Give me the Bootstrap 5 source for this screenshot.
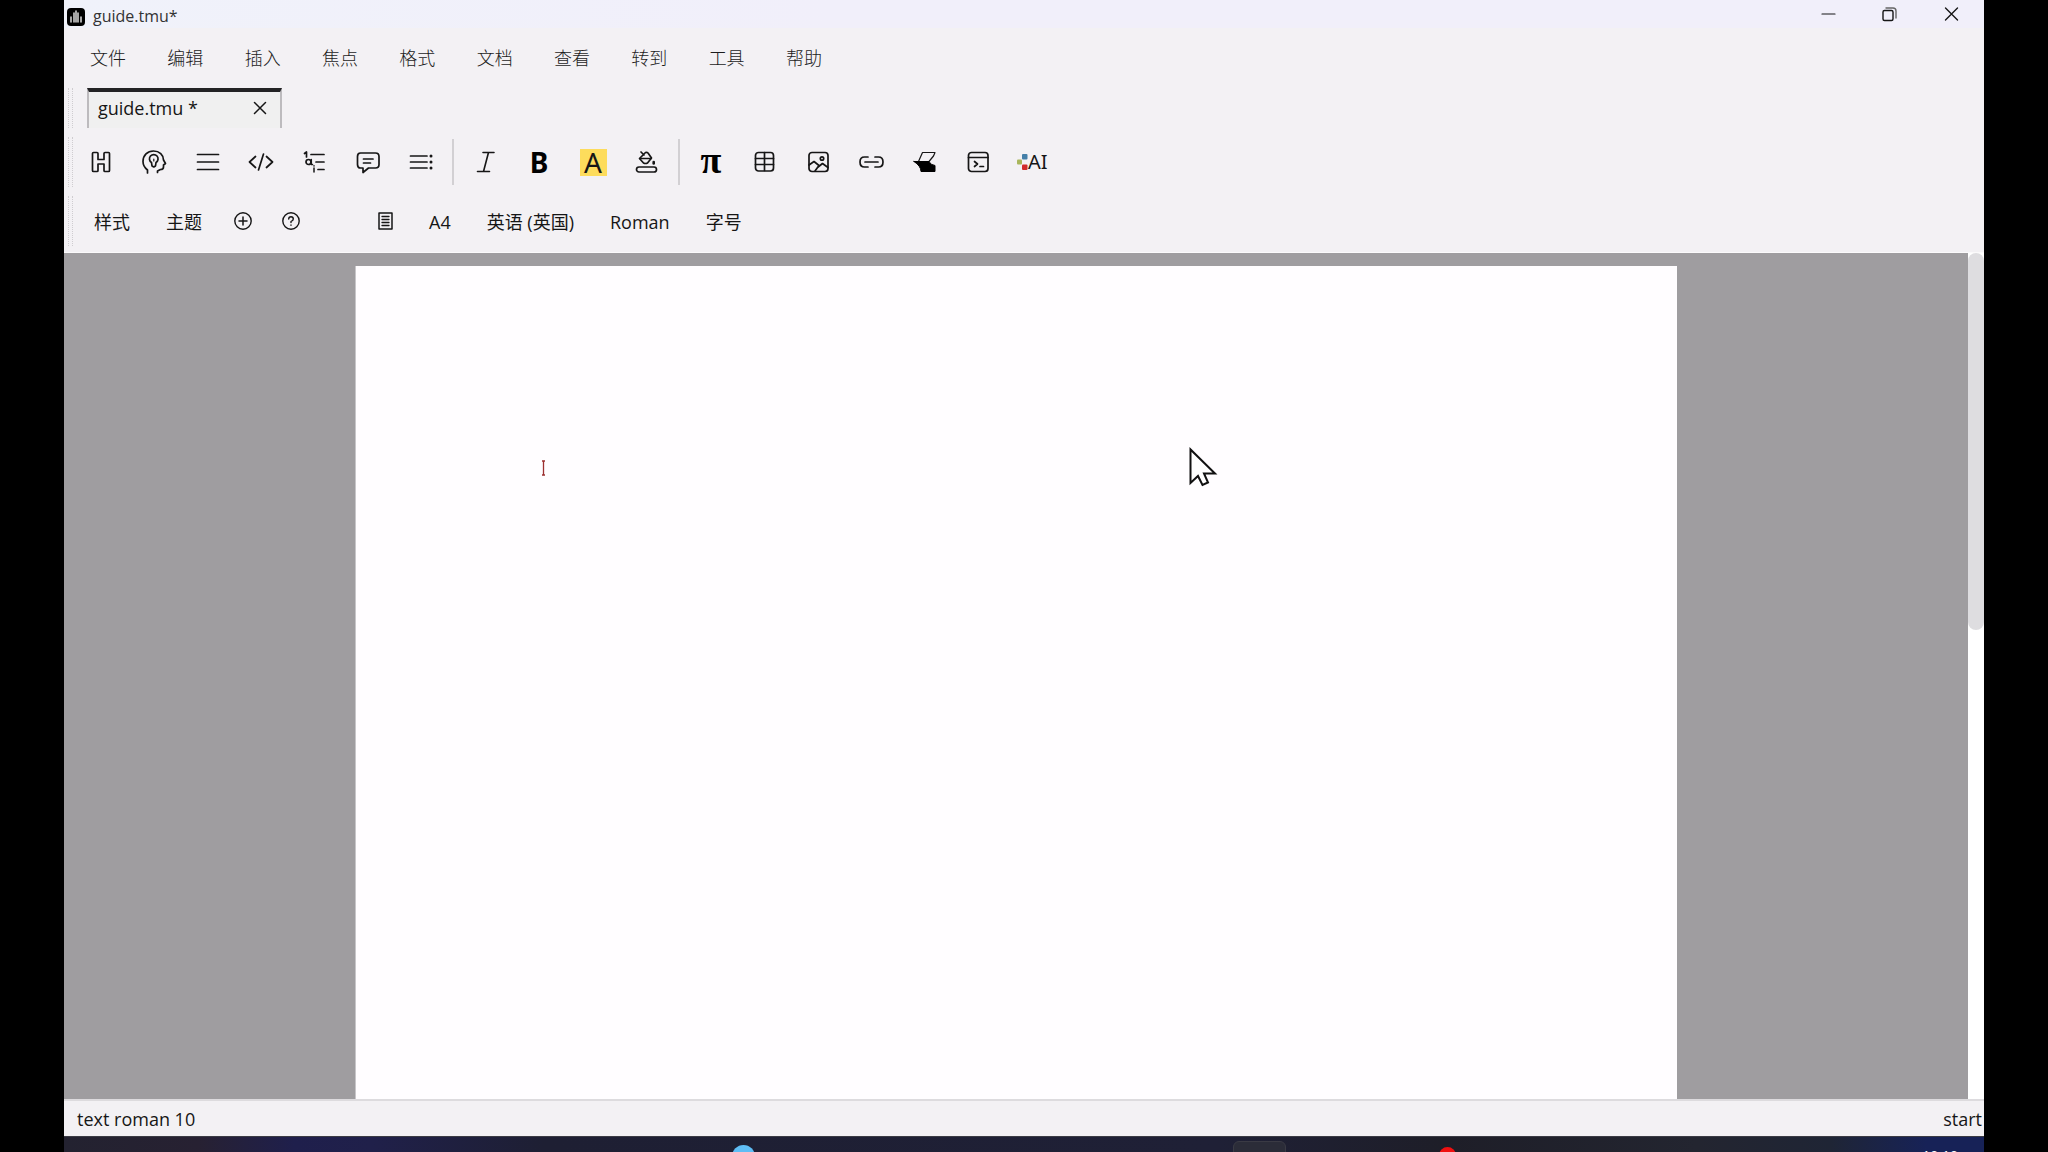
<!DOCTYPE html>
<html lang="zh-CN">
<head>
<meta charset="utf-8">
<meta name="viewport" content="width=device-width, initial-scale=1">
<title>guide.tmu*</title>
<link href="https://cdn.jsdelivr.net/npm/bootstrap@5.3.0/dist/css/bootstrap.min.css" rel="stylesheet">
<script src="https://cdn.jsdelivr.net/npm/bootstrap@5.3.0/dist/js/bootstrap.bundle.min.js"></script>
<style>
  :root { --chrome: #f3f1f4; --desk: #9f9da0; --ink: #161616; }
  body { background: #000; color: var(--ink); font-family: "Open Sans", "Noto Sans CJK SC", sans-serif; font-size: 18px; line-height: 24px; }
  button { font: inherit; color: inherit; background: none; border: 0; padding: 0; }
  svg { display: block; fill: none; stroke: var(--ink); stroke-width: 1.7; stroke-linecap: round; stroke-linejoin: round; }
  .app-window { margin: 0 64px; background: var(--chrome); }
  .title-bar { height: 28px; background: linear-gradient(90deg, #f0f2fa, #f1effa 40%, #f1effa); font-size: 16px; padding-left: 3px; color: #333; }
  .title-name { padding-top: 4px; }
  .win-buttons { gap: 30px; padding-right: 16px; }
  .menu-strip { height: 60px; padding-left: 26px; }
  .menu-list { width: 732px; }
  .menu-list a { color: #1c1c1c; text-decoration: none; font-weight: 300; }
  .grip { width: 5px; margin-left: 4px; border: dotted #cfcdd0; border-width: 0 1px; }
  .tab-strip { height: 40px; }
  .doc-tab { width: 195px; margin-left: 14px; padding: 0 13px 4px 9px; background: #f0f0f0; border: 2px solid #bdbbbe; border-top: 4px solid #232325; border-bottom: 0; }
  .icon-strip { height: 50px; margin-top: 9px; }
  .icon-strip button { width: 32px; height: 32px; }
  .tools-a { width: 352px; margin-left: 12px; }
  .tools-b { width: 194px; }
  .divider { width: 2px; height: 46px; margin: 0 15px; background: #d2d0d3; }
  .glyph-b { font: 700 28px/32px "Noto Sans", sans-serif; color: #000; }
  .glyph-a { font: 400 28px/27px "Noto Sans", sans-serif; background: #fddc5c; width: 27px; height: 27px; }
  .icon-strip .glyph-pi { font: 700 38px/28px "Liberation Serif", serif; color: #000; padding-bottom: 4px; }
  .icon-strip .glyph-ai { font: 400 20px/32px "Noto Sans", sans-serif; }
  .style-strip { height: 50px; margin-top: 9px; margin-bottom: 6px; }
  .style-tools { gap: 36px; margin-left: 21px; padding-top: 2px; }
  .style-tools svg { margin-bottom: 2px; }
  .round-tools { gap: 30px; margin: 0 42px 0 -4px; }
  .desk { background: var(--desk); border-top: 1px solid #fbfafb; min-height: 0; }
  .paper { width: 69.4%; margin-top: 13px; padding: 194px 185px; background: #fffdff; border-left: 1px solid #c8c6c9; }
  .scroll-track { width: 16px; background: #fff; }
  .scroll-thumb { height: 44.6%; background: #dedde0; border-radius: 8px; }
  .status-bar { height: 37px; padding: 0 2px 0 13px; border-top: 2px solid #dddbde; }
  .task-bar { height: 16px; border-top: 1px solid #3b3b44; background: linear-gradient(90deg, #232230, #272132 7%, #1f1f4c 12%, #20204a 16%, #1e1f33 25%, #1f2036 60%, #1e1e28 72%, #232530 85%, #1f2535 92%, #172257 97%); }
  .task-items > * { position: absolute; }
  .task-blue { left: 668px; top: 8px; width: 23px; height: 23px; border-radius: 50%; background: #5fbdf5; }
  .task-box { left: 1169px; top: 4px; width: 53px; height: 40px; border-radius: 6px; background: #2b2c38; border: 1px solid #3a3a44; }
  .task-red { left: 1375px; top: 10px; width: 17px; height: 17px; border-radius: 50%; background: #f01010; }
  .task-clock { right: 26px; top: 7px; font-size: 14px; color: #fff; }
  .pointer { position: absolute; left: 1187px; top: 445px; }
</style>
</head>
<body>
<div class="app-window d-flex flex-column vh-100 overflow-hidden">
  <header class="title-bar d-flex justify-content-between">
    <div class="d-flex gap-2 title-left">
      <svg class="mt-1 pt-1" width="18" height="22" viewBox="0 0 18 18"><rect x="0" y="0" width="18" height="18" rx="4" fill="#000" stroke="none"/><path d="M4 14V9M7 14V5M9 14V3M11 14V5M14 14V9" stroke="#ddd" stroke-width="1.5"/></svg>
      <span class="title-name">guide.tmu*</span>
    </div>
    <div class="win-buttons d-flex align-items-center">
      <button type="button" aria-label="最小化"><svg width="32" height="28" viewBox="0 0 32 28"><path d="M10 14h13" stroke-width="1.2"/></svg></button>
      <button type="button" aria-label="还原"><svg width="32" height="28" viewBox="0 0 32 28"><rect x="9" y="10.500" width="10" height="10" rx="1.500" stroke-width="1.400"/><path d="M12 8h7q3 0 3 3v7" stroke="#666" stroke-width="1.400"/></svg></button>
      <button type="button" aria-label="关闭"><svg width="32" height="28" viewBox="0 0 32 28"><path d="M9.500 8l12 12M21.500 8l-12 12" stroke-width="1.400"/></svg></button>
    </div>
  </header>

  <nav class="menu-strip d-flex align-items-center">
    <div class="menu-list d-flex justify-content-between">
      <a href="#">文件</a><a href="#">编辑</a><a href="#">插入</a><a href="#">焦点</a><a href="#">格式</a><a href="#">文档</a><a href="#">查看</a><a href="#">转到</a><a href="#">工具</a><a href="#">帮助</a>
    </div>
  </nav>

  <div class="tab-strip d-flex">
    <div class="grip"></div>
    <div class="doc-tab d-flex justify-content-between align-items-center">
      <span>guide.tmu *</span>
      <button type="button" aria-label="关闭标签"><svg width="14" height="14" viewBox="0 0 14 14"><path d="M1.500 1.500l11 11M12.500 1.500l-11 11" stroke-width="1.500"/></svg></button>
    </div>
  </div>

  <div class="icon-strip d-flex align-items-center">
    <div class="grip align-self-stretch"></div>
    <div class="tools-a d-flex justify-content-between">
      <button type="button" aria-label="标题"><svg width="32" height="32" viewBox="0 0 32 32"><path d="M8.500 6.500h3.500q1 0 1 1v6h6v-6q0-1 1-1h3.500q1 0 1 1v17q0 1-1 1h-3.500q-1 0-1-1v-6.500h-6v6.500q0 1-1 1h-3.500q-1 0-1-1v-17q0-1 1-1z"/></svg></button>
      <button type="button" aria-label="思路"><svg width="32" height="32" viewBox="0 0 32 32"><path d="M9.500 27V24Q5 20.500 5 15.500C5 9 9.500 5 15.500 5S25.500 9 25.500 14L27.500 17.500L25.500 19V21Q25.500 23.500 22.500 23.500L19.500 25V26.500"/><path d="M13.500 16.500A4.300 4.300 0 1 1 18 16.500L17.500 20L15.800 21L14 20z"/><path d="M15.800 13v2" stroke-width="1.200"/></svg></button>
      <button type="button" aria-label="段落"><svg width="32" height="32" viewBox="0 0 32 32"><path d="M5.500 8.500h21M5.500 16h21M5.500 23.500h21"/></svg></button>
      <button type="button" aria-label="代码"><svg width="32" height="32" viewBox="0 0 32 32"><path d="M10.500 10.500L4.500 16l6 5.500M21.500 10.500l6 5.500-6 5.500M18.500 8l-5 16"/></svg></button>
      <button type="button" aria-label="列表"><svg width="32" height="32" viewBox="0 0 32 32"><path d="M6.500 7.500L8.500 6v5M13 8.500h13M18 16h8M20 23.500h6"/><circle cx="10.500" cy="16" r="2.500"/><path d="M13.300 13.500v5h1.200M16 22v4M16 19.800v.2" stroke-width="1.500"/></svg></button>
      <button type="button" aria-label="注释"><svg width="32" height="32" viewBox="0 0 32 32"><path d="M8.500 7h15q3.500 0 3.500 3.500v8q0 3.500-3.500 3.500h-7L11 26.500V22H8.500Q5.500 22 5.500 18.500v-8Q5.500 7 8.500 7zM11.500 13h9.500M11.500 17h7"/></svg></button>
      <button type="button" aria-label="目录"><svg width="32" height="32" viewBox="0 0 32 32"><path d="M5.500 10h16.500M5.500 16h16.500M5.500 22h16.500"/><path d="M26 10v.1M26 16v.1M26 22v.1" stroke-width="3"/></svg></button>
    </div>
    <div class="divider"></div>
    <div class="tools-b d-flex justify-content-between align-items-center">
      <button type="button" aria-label="斜体"><svg width="32" height="32" viewBox="0 0 32 32"><path d="M14 6.500h11M8.500 25.500h12M19.500 6.500L14.500 25.500" stroke-width="1.600"/></svg></button>
      <button type="button" class="glyph-b">B</button>
      <button type="button" class="d-flex justify-content-center align-items-center"><span class="glyph-a">A</span></button>
      <button type="button" aria-label="填充颜色"><svg width="32" height="32" viewBox="0 0 32 32"><rect x="5.500" y="21" width="20" height="5" rx="2.500"/><path d="M10 6l3 3M14.500 6.500Q16 6 17 7L20.500 12L16.500 17q-2 1-4 0L8.500 12.500z"/><path d="M9 12.500h11"/><path d="M22.700 16v1.400" stroke-width="2.600"/></svg></button>
    </div>
    <div class="divider"></div>
    <div class="tools-c d-flex justify-content-between tools-a ms-0">
      <button type="button" class="glyph-pi">π</button>
      <button type="button" aria-label="表格"><svg width="32" height="32" viewBox="0 0 32 32"><rect x="7.500" y="6.500" width="18" height="18.500" rx="3"/><path d="M7.500 12.500h18M7.500 18.500h18M16.500 6.500v18"/></svg></button>
      <button type="button" aria-label="图片"><svg width="32" height="32" viewBox="0 0 32 32"><rect x="7" y="6.500" width="19" height="19" rx="3"/><circle cx="20" cy="12.500" r="1.700"/><path d="M7 19l5-3.500 5 4-4 5.500M15.500 21.500l5-4 5.500 4"/></svg></button>
      <button type="button" aria-label="链接"><svg width="32" height="32" viewBox="0 0 32 32"><path d="M13 11H9.500Q5 11 5 16T9.500 21H13M20 11h3.500Q28 11 28 16T23.500 21H20M10 16h13"/></svg></button>
      <button type="button" aria-label="橡皮擦"><svg width="32" height="32" viewBox="0 0 32 32"><path d="M10.500 15.500L14.500 6.500H27L25.500 10L21 15.500" fill="#f3f1f4" stroke-width="1.200"/><path d="M6 15.500H21Q22.500 19 27 19.500V25.500H13Q13 20 6 15.500z" fill="#000" stroke="#000" stroke-width="1"/></svg></button>
      <button type="button" aria-label="终端"><svg width="32" height="32" viewBox="0 0 32 32"><rect x="6.500" y="6.500" width="19.500" height="19" rx="3"/><path d="M6.500 11.500h19.500M12.500 15.500l3 2.500-3 2.500M18 20.500h3.500"/></svg></button>
      <button type="button" class="glyph-ai d-flex"><svg class="flex-shrink-0" width="13" height="32" viewBox="0 0 13 32"><g stroke="none"><rect x="7" y="8" width="5.500" height="5.500" rx="1" fill="#447fa8"/><rect x="2" y="13.500" width="5" height="5" rx="1" fill="#a9b65c"/><rect x="7" y="18.500" width="5.500" height="5.500" rx="1" fill="#d22b2b"/></g></svg><span>AI</span></button>
    </div>
  </div>

  <div class="style-strip d-flex align-items-center">
    <div class="grip align-self-stretch"></div>
    <div class="style-tools d-flex align-items-center">
      <button type="button">样式</button>
      <button type="button">主题</button>
      <div class="round-tools d-flex">
        <button type="button" aria-label="添加"><svg width="18" height="18" viewBox="0 0 18 18"><circle cx="9" cy="9" r="8.200" stroke-width="1.400"/><path d="M9 5v8M5 9h8" stroke-width="1.500"/></svg></button>
        <button type="button" aria-label="帮助"><svg width="18" height="18" viewBox="0 0 18 18"><circle cx="9" cy="9" r="8.200" stroke-width="1.400"/><path d="M6.700 7q0-2.200 2.300-2.200T11.300 7Q11.300 8.300 9 9.500v1M9 13v.2" stroke-width="1.400"/></svg></button>
      </div>
      <button type="button" aria-label="页面"><svg width="15" height="18" viewBox="0 0 15 18"><rect x="1" y="1" width="13" height="16" stroke-width="1.500"/><path d="M4 4.500h7M4 7.500h7M4 10.500h7M4 13.500h7" stroke-width="1.300"/></svg></button>
      <button type="button">A4</button>
      <button type="button">英语 (英国)</button>
      <button type="button">Roman</button>
      <button type="button">字号</button>
    </div>
  </div>

  <main class="desk d-flex flex-grow-1">
    <div class="flex-grow-1 d-flex justify-content-center">
      <div class="paper">
        <svg width="5" height="16" viewBox="0 0 5 16"><path d="M2.500 1.500v13M1 1h3M1 15h3" stroke="#9c3030" stroke-width="1.300" stroke-linecap="butt"/></svg>
      </div>
    </div>
    <div class="scroll-track"><div class="scroll-thumb"></div></div>
  </main>

  <footer class="status-bar d-flex justify-content-between align-items-center flex-shrink-0">
    <span>text roman 10</span><span>start</span>
  </footer>
  <div class="task-bar task-items position-relative overflow-hidden flex-shrink-0">
    <span class="task-blue"></span><span class="task-box"></span><span class="task-red"></span><span class="task-clock">10:10</span>
  </div>
</div>
<svg class="pointer" width="32" height="44" viewBox="0 0 32 44"><path d="M3.500 4.500V38l7.500-7 4.500 9 5.500-2.500-4-9H28z" fill="#fff" stroke="#111" stroke-width="2" stroke-linejoin="miter"/></svg>
</body>
</html>
